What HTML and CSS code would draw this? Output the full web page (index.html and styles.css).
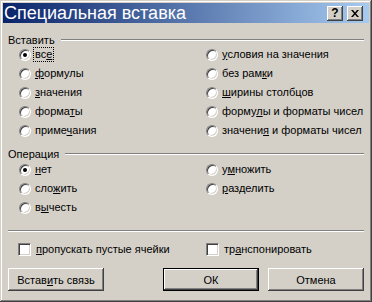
FILE: index.html
```html
<!DOCTYPE html>
<html lang="ru">
<head>
    <meta charset="UTF-8">
    <title>Специальная вставка</title>
    <link rel="stylesheet" href="styles.css">
</head>
<body>
<div class="window">
    <!-- заголовок -->
    <div class="titlebar">
        <span class="title">Специальная вставка</span>
        <div class="cap-btns">
            <button class="cap-btn help">?</button>
            <button class="cap-btn close">
                <svg width="8" height="7" viewBox="0 0 8 7"><path d="M0 0h2l2 2.5L6 0h2L5 3.5 8 7H6L4 4.5 2 7H0l3-3.5z" fill="#000"/></svg>
            </button>
        </div>
    </div>

    <div class="content">
        <!-- Вставить -->
        <div class="group-head"><span>Вставить</span><div class="etch"></div></div>
        <div class="options paste-opts">
            <label class="opt"><span class="radio checked"></span><span class="txt focus">вс<u>е</u></span></label>
            <label class="opt"><span class="radio"></span><span class="txt"><u>ф</u>ормулы</span></label>
            <label class="opt"><span class="radio"></span><span class="txt"><u>з</u>начения</span></label>
            <label class="opt"><span class="radio"></span><span class="txt">форма<u>т</u>ы</span></label>
            <label class="opt"><span class="radio"></span><span class="txt">приме<u>ч</u>ания</span></label>
            <label class="opt"><span class="radio"></span><span class="txt"><u>у</u>словия на значения</span></label>
            <label class="opt"><span class="radio"></span><span class="txt">без рам<u>к</u>и</span></label>
            <label class="opt"><span class="radio"></span><span class="txt"><u>ш</u>ирины столбцов</span></label>
            <label class="opt"><span class="radio"></span><span class="txt">форму<u>л</u>ы и форматы чисел</span></label>
            <label class="opt"><span class="radio"></span><span class="txt">значени<u>я</u> и форматы чисел</span></label>
        </div>

        <!-- Операция -->
        <div class="group-head"><span>Операция</span><div class="etch"></div></div>
        <div class="options op-opts">
            <label class="opt"><span class="radio checked"></span><span class="txt"><u>н</u>ет</span></label>
            <label class="opt"><span class="radio"></span><span class="txt">сло<u>ж</u>ить</span></label>
            <label class="opt"><span class="radio"></span><span class="txt">в<u>ы</u>честь</span></label>
            <label class="opt"><span class="radio"></span><span class="txt">у<u>м</u>ножить</span></label>
            <label class="opt"><span class="radio"></span><span class="txt"><u>р</u>азделить</span></label>
        </div>

        <div class="etch sep"></div>

        <div class="checks">
            <label class="opt"><span class="checkbox"></span><span class="txt"><u>п</u>ропускать пустые ячейки</span></label>
            <label class="opt"><span class="checkbox"></span><span class="txt">тр<u>а</u>нспонировать</span></label>
        </div>

        <div class="buttons">
            <button class="btn">Встав<u>и</u>ть связь</button>
            <div class="btn-pair">
                <button class="btn default">ОК</button>
                <button class="btn">Отмена</button>
            </div>
        </div>
    </div>
</div>
</body>
</html>
```

FILE: styles.css
```css
* {
    margin: 0;
    padding: 0;
    box-sizing: border-box;
}

body {
    font-family: "Liberation Sans", Arial, sans-serif;
    font-size: 11px;
    color: #000;
    background: #d4d0c8;
}

u {
    text-decoration: underline;
    text-underline-offset: 1px;
}

/* окно */
.window {
    width: 372px;
    height: 302px;
    background: #d4d0c8;
    padding: 3px;
    box-shadow: inset -1px -1px 0 #404040, inset 1px 1px 0 #d4d0c8,
                inset -2px -2px 0 #808080, inset 2px 2px 0 #fff;
    display: flex;
    flex-direction: column;
}

.titlebar {
    height: 20px;
    background: linear-gradient(to right, #0a246a, #a6caf0);
    display: flex;
    align-items: center;
    justify-content: space-between;
    padding: 0 6px 0 1px;
}

.title {
    color: #fff;
    font-size: 18px;
    line-height: 20px;
}

.cap-btns {
    display: flex;
    gap: 4px;
}

.cap-btn {
    width: 16px;
    height: 15px;
    background: #d4d0c8;
    border: none;
    box-shadow: inset -1px -1px 0 #404040, inset 1px 1px 0 #fff,
                inset -2px -2px 0 #808080, inset 2px 2px 0 #d4d0c8;
    display: flex;
    align-items: center;
    justify-content: center;
    font-family: "Liberation Sans", Arial, sans-serif;
    font-weight: bold;
    font-size: 12px;
    line-height: 14px;
    color: #000;
}

.cap-btn svg {
    display: block;
}

.content {
    flex: 1;
    padding: 10px 5px 0 5px;
    display: flex;
    flex-direction: column;
}

/* рамка группы */
.group-head {
    display: flex;
    align-items: center;
    gap: 6px;
    height: 13px;
}

.etch {
    flex: 1;
    height: 2px;
    border-top: 1px solid #808080;
    border-bottom: 1px solid #fff;
}

.options {
    display: grid;
    grid-auto-flow: column;
    grid-template-columns: 187px 1fr;
    padding-left: 11px;
}

.paste-opts {
    grid-template-rows: repeat(5, 19px);
    margin-top: -1px;
    margin-bottom: 7px;
}

.op-opts {
    grid-template-rows: repeat(3, 19px);
}

.opt {
    display: flex;
    align-items: center;
    gap: 3px;
    white-space: nowrap;
}

.txt {
    padding: 0 1px;
    line-height: 13px;
}

.txt.focus {
    outline: 1px dotted #000;
    outline-offset: 0;
}

/* радиокнопка */
.radio {
    width: 12px;
    height: 12px;
    border-radius: 50%;
    background: #fff;
    border: 1px solid;
    border-color: #808080 #fff #fff #808080;
    box-shadow: inset 1px 1px 0 #404040, inset -1px -1px 0 #d4d0c8;
    display: flex;
    align-items: center;
    justify-content: center;
    flex: none;
}

.radio.checked::after {
    content: "";
    width: 4px;
    height: 4px;
    border-radius: 50%;
    background: #000;
}

.checkbox {
    width: 13px;
    height: 13px;
    background: #fff;
    border: 1px solid;
    border-color: #808080 #fff #fff #808080;
    box-shadow: inset 1px 1px 0 #404040, inset -1px -1px 0 #d4d0c8;
    flex: none;
    margin-right: 1px;
}

.sep {
    flex: none;
    margin-top: 13px;
}

.checks {
    display: grid;
    grid-template-columns: 188px 1fr;
    padding-left: 10px;
    margin-top: 10px;
    height: 14px;
}

.buttons {
    display: flex;
    justify-content: space-between;
    margin-top: 12px;
}

.btn-pair {
    display: flex;
    gap: 9px;
}

.btn {
    width: 96px;
    height: 23px;
    background: #d4d0c8;
    border: none;
    font-family: "Liberation Sans", Arial, sans-serif;
    font-size: 11px;
    color: #000;
    box-shadow: inset -1px -1px 0 #404040, inset 1px 1px 0 #fff,
                inset -2px -2px 0 #808080, inset 2px 2px 0 #d4d0c8;
}

.btn.default {
    box-shadow: inset 0 0 0 1px #000,
                inset -2px -2px 0 #404040, inset 2px 2px 0 #fff,
                inset -3px -3px 0 #808080;
}
```
